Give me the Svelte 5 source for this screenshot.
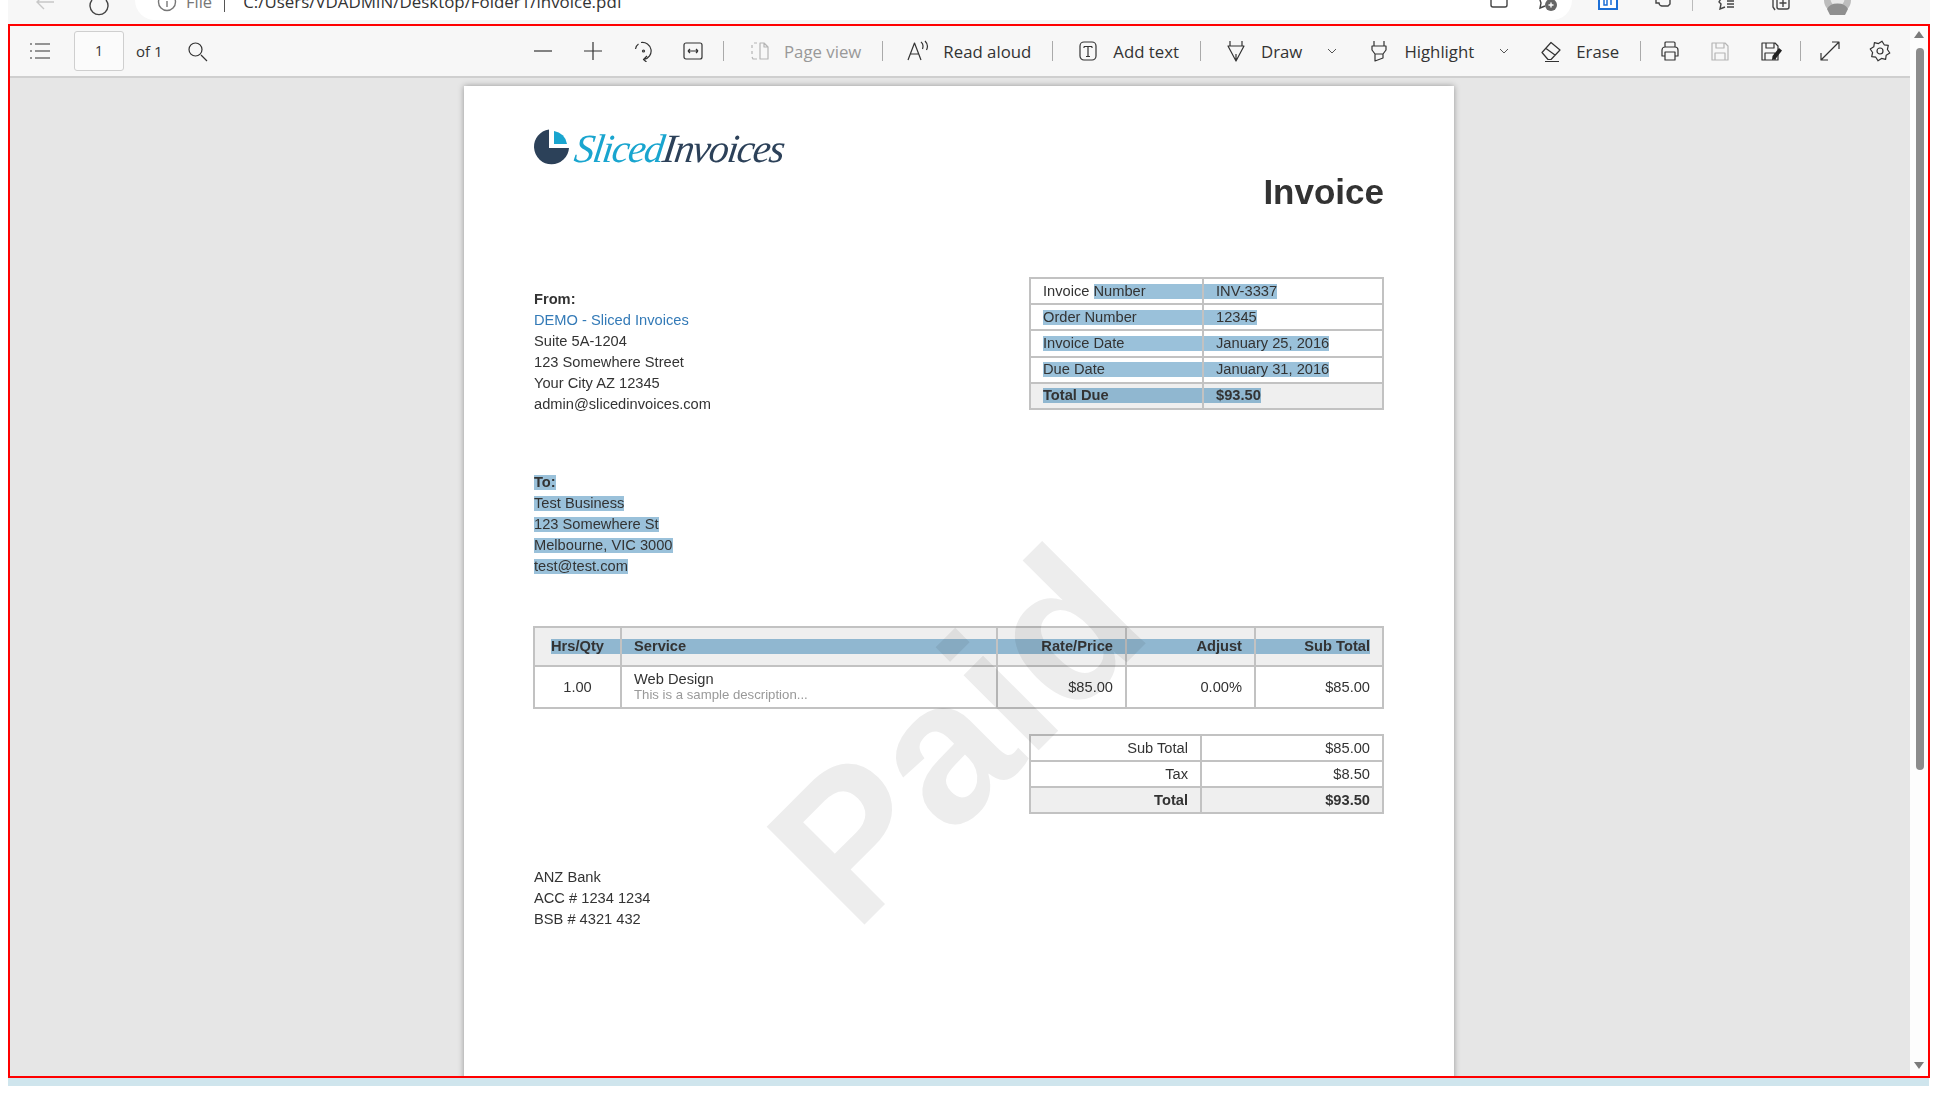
<script>
	const icons = {
		list: 'M1 4h2M6 4h15M1 11h2M6 11h15M1 18h2M6 18h15',
		search: 'M15 15l6 6M16 9.5a6.5 6.5 0 1 1-13 0a6.5 6.5 0 0 1 13 0z',
		minus: 'M2 11h18',
		plus: 'M11 2v18M2 11h18',
		rotate: 'M3.500 9C4 6.500 5 5 6.500 4M9 2.500a8.500 8.500 0 0 1 3 17M15 16l-3.500 3.500 3 2.500M10.500 11a1 1 0 1 0 2 0a1 1 0 1 0-2 0z',
		fit: 'M4 3h14a2 2 0 0 1 2 2v12a2 2 0 0 1-2 2H4a2 2 0 0 1-2-2V5a2 2 0 0 1 2-2zM6 11h10M6 11l2-2M6 11l2 2M16 11l-2-2M16 11l-2 2',
		page: 'M9 3H6M4 5v3M4 11v3M4 17l1 2h4M12 3h4l4 4v12h-8zM16 3v4h4',
		aloud: 'M1 20L7.500 3 14 20M3.500 14h8M14 2c2 1.500 2.500 4 1.500 7M18 1c2.500 2.500 3 6 1.500 9',
		text: 'M7 2h8a4 4 0 0 1 4 4v10a4 4 0 0 1-4 4H7a4 4 0 0 1-4-4V6a4 4 0 0 1 4-4zM7 6.500h8M7 6.500v1.500M15 6.500v1.500M11 6.500v10M9 16.500h4',
		draw: 'M5 1v5h12V1M3 6h16l-8 15zM11 21v-7',
		mark: 'M6 1v5h10V1M4 6h14v4l-3 4H7l-3-4zM7 14v7l8-3v-4',
		erase: 'M2 12.500L11 2.500l9 7.500-9 9.500H8zM6 8.500l9 6.500M5 21.500h14',
		print: 'M6 7V3a1 1 0 0 1 1-1h8a1 1 0 0 1 1 1v4M6 16H3V10a3 3 0 0 1 3-3h10a3 3 0 0 1 3 3v6h-3M6 12h10v8H6z',
		save: 'M3 3h13l3 3v14H3zM7 3v5h8V3M6 20v-7h10v7',
		expand: 'M2 20L20 2M13 2h7v7M2 13v7h7'
	};

	// eight-toothed outline for the settings icon
	function gearPath() {
		let d = '';
		for (let i = 0; i < 16; i++) {
			const a = (i * Math.PI) / 8 + Math.PI / 16;
			const r = i % 2 ? 7.5 : 10;
			d += `${i ? 'L' : 'M'}${(11 + r * Math.cos(a)).toFixed(1)} ${(11 + r * Math.sin(a)).toFixed(1)}`;
		}
		return d + 'zM14 11a3 3 0 1 1-6 0a3 3 0 0 1 6 0z';
	}
	icons.gear = gearPath();

	const from = ['Suite 5A-1204', '123 Somewhere Street', 'Your City AZ 12345', 'admin@slicedinvoices.com'];
	const to = ['Test Business', '123 Somewhere St', 'Melbourne, VIC 3000', 'test@test.com'];
	const meta = [
		{ label: 'Order Number', value: '12345' },
		{ label: 'Invoice Date', value: 'January 25, 2016' },
		{ label: 'Due Date', value: 'January 31, 2016' }
	];
	const totals = [
		{ label: 'Sub Total', value: '$85.00' },
		{ label: 'Tax', value: '$8.50' },
		{ label: 'Total', value: '$93.50', strong: true }
	];
</script>

{#snippet icon(name, cls = '')}
	<svg class="icon {cls}" viewBox="0 0 22 22" aria-hidden="true"><path d={icons[name]} /></svg>
{/snippet}

{#snippet chevron()}
	<svg class="chevron" viewBox="0 0 12 12" aria-hidden="true"><path d="M2 4l4 4 4-4" /></svg>
{/snippet}

<div class="browser">
	<header class="chrome">
		<div class="nav-icons">
			<svg class="c-icon back" viewBox="0 0 22 22"><path d="M20 2H4M10 -5l-7 7 7 7" /></svg>
			<svg class="c-icon" viewBox="0 0 22 22"><path d="M18 0a9 9 0 1 1-14 0" /></svg>
		</div>
		<div class="address">
			<svg class="c-icon info" viewBox="0 0 20 20"><circle cx="10" cy="2" r="8.500" /><path d="M10 1v6" /></svg>
			<span class="scheme">File</span>
			<span class="pipe"></span>
			<span class="url">C:/Users/VDADMIN/Desktop/Folder1/invoice.pdf</span>
			<div class="address-end">
				<svg class="c-icon small" viewBox="0 0 18 8"><path d="M1 -5v10a2 2 0 0 0 2 2h12a2 2 0 0 0 2-2v-10" /></svg>
				<svg class="c-icon fav" viewBox="0 0 22 12"><path d="M3 -3l2 6-1 5 5-2" /><circle cx="15" cy="5" r="6" fill="#666" stroke="none" /><path d="M15 2.500v5M12.500 5h5" stroke="#fff" /></svg>
			</div>
		</div>
		<div class="ext-icons">
			<svg class="c-icon outlook" viewBox="0 0 20 10"><rect x="1" y="-4" width="18" height="13" fill="#fff" stroke="#1c6fd6" stroke-width="2" /><path d="M6 -2v7h3v-7zM13 -2v7" stroke="#1c6fd6" stroke-width="1.500" /></svg>
			<svg class="c-icon puzzle" viewBox="0 0 20 10"><path d="M3 -4v7h3c0 2 2 3 3 3h6l2-2V-2" /></svg>
			<span class="pipe ext-pipe"></span>
			<svg class="c-icon star" viewBox="0 0 20 10"><path d="M6 -3L3 2l2 2-1 5 5-2M11 1h7M11 4h7M11 7h7" /></svg>
			<svg class="c-icon coll" viewBox="0 0 22 11"><path d="M3 -3v10l2 3M7 -3h12v10a2 2 0 0 1-2 2H9a2 2 0 0 1-2-2zM13 -1v8M9.500 3h7" /></svg>
			<svg class="avatar" viewBox="0 0 27 15"><circle cx="13.500" cy="0" r="13.500" fill="#bdbdbd" /><circle cx="13.500" cy="-1" r="7" fill="#e8e8e8" /><path d="M3 9a11 8 0 0 1 21 0l-3 6H6z" fill="#8f8f8f" /></svg>
			<span class="more">•••</span>
		</div>
	</header>

	<div class="viewer">
		<div class="toolbar">
			<button class="tool">{@render icon('list')}</button>
			<span class="page-input">1</span>
			<span class="page-total">of 1</span>
			<button class="tool search">{@render icon('search')}</button>

			<div class="tools">
				<button class="tool">{@render icon('minus')}</button>
				<button class="tool">{@render icon('plus')}</button>
				<button class="tool">{@render icon('rotate')}</button>
				<button class="tool">{@render icon('fit')}</button>
				<span class="sep"></span>
				<button class="labelled disabled">{@render icon('page')}<span>Page view</span></button>
				<span class="sep"></span>
				<button class="labelled">{@render icon('aloud')}<span>Read aloud</span></button>
				<span class="sep"></span>
				<button class="labelled">{@render icon('text')}<span>Add text</span></button>
				<span class="sep"></span>
				<button class="labelled with-menu">{@render icon('draw')}<span>Draw</span>{@render chevron()}</button>
				<button class="labelled with-menu">{@render icon('mark')}<span>Highlight</span>{@render chevron()}</button>
				<button class="labelled erase">{@render icon('erase')}<span>Erase</span></button>
				<span class="sep"></span>
				<button class="tool">{@render icon('print')}</button>
				<button class="tool disabled">{@render icon('save')}</button>
				<button class="tool save-as">
					{@render icon('save')}
					<svg class="pencil" viewBox="0 0 10 12"><path d="M7 0l3 2.500L3.500 11 0 12l.5-4z" /></svg>
				</button>
				<span class="sep"></span>
				<button class="tool">{@render icon('expand')}</button>
				<button class="tool">{@render icon('gear')}</button>
			</div>
		</div>

		<div class="canvas">
			<article class="page">
				<div class="logo">
					<svg class="pie" viewBox="0 0 37 37">
						<path d="M16 1.500A17.500 17.500 0 1 0 36 20H16z" fill="#2c4159" />
						<path d="M21 3a15 15 0 0 1 13 13H21z" fill="#19a5cf" />
					</svg>
					<span class="wordmark"><span class="sliced">Sliced</span><span class="invoices">Invoices</span></span>
				</div>

				<h1>Invoice</h1>

				<div class="meta-row">
					<address class="block from">
						<strong>From:</strong>
						<span class="link">DEMO - Sliced Invoices</span>
						{#each from as line}
							<span>{line}</span>
						{/each}
					</address>

					<table class="grid meta">
						<colgroup><col class="meta-label" /><col /></colgroup>
						<tbody>
							<tr>
								<td><div class="fill-right"><span>Invoice&nbsp;</span><mark>Number</mark></div></td>
								<td><mark class="fill-left">INV-3337</mark></td>
							</tr>
							{#each meta as row}
								<tr>
									<td><mark class="whole">{row.label}</mark></td>
									<td><mark class="fill-left">{row.value}</mark></td>
								</tr>
							{/each}
							<tr class="shaded bold">
								<td><mark class="whole">Total Due</mark></td>
								<td><mark class="fill-left">$93.50</mark></td>
							</tr>
						</tbody>
					</table>
				</div>

				<address class="block to">
					<strong><mark>To:</mark></strong>
					{#each to as line}
						<span><mark>{line}</mark></span>
					{/each}
				</address>

				<table class="grid items">
					<colgroup>
						<col class="c-qty" /><col class="c-service" /><col class="c-num" /><col class="c-num" /><col />
					</colgroup>
					<thead>
						<tr class="shaded bold">
							<th><mark class="whole qty-head">Hrs/Qty</mark></th>
							<th><mark class="whole left-head">Service</mark></th>
							<th><mark class="whole num">Rate/Price</mark></th>
							<th><mark class="whole num">Adjust</mark></th>
							<th class="last-head"><mark class="whole">Sub Total</mark></th>
						</tr>
					</thead>
					<tbody>
						<tr>
							<td class="center">1.00</td>
							<td class="service">Web Design<small>This is a sample description...</small></td>
							<td class="num">$85.00</td>
							<td class="num">0.00%</td>
							<td class="num">$85.00</td>
						</tr>
					</tbody>
				</table>

				<table class="grid totals">
					<colgroup><col class="t-label" /><col /></colgroup>
					<tbody>
						{#each totals as row}
							<tr class:shaded={row.strong} class:bold={row.strong}>
								<td class="num">{row.label}</td>
								<td class="num">{row.value}</td>
							</tr>
						{/each}
					</tbody>
				</table>

				<address class="block bank">
					<span>ANZ Bank</span>
					<span>ACC # 1234 1234</span>
					<span>BSB # 4321 432</span>
				</address>

				<svg class="watermark" aria-hidden="true">
					<text transform="translate(391 848) rotate(-45)">Paid</text>
				</svg>
			</article>
		</div>

		<div class="scrollbar">
			<span class="arrow up"></span>
			<span class="thumb"></span>
			<span class="arrow down"></span>
		</div>
	</div>
	<div class="strip"></div>
</div>

<style>
	:global(body) {
		background: #fff;
	}

	.browser {
		width: 1938px;
		height: 1102px;
		overflow: hidden;
		background: #fff;
		font-family: 'Liberation Sans', Arial, sans-serif;
		color: #333;
	}

	/* browser chrome, cut off by the top of the picture */
	.chrome {
		display: flex;
		height: 24px;
		margin-left: 8px;
		width: 1922px;
		background: #f7f7f7;
		font-family: 'Open Sans', sans-serif;
		font-size: 16.500px;
		overflow: hidden;
	}

	.nav-icons {
		display: flex;
		width: 127px;
		padding-left: 26px;
		gap: 32px;
		box-sizing: border-box;
	}

	.c-icon {
		width: 22px;
		height: 22px;
		fill: none;
		stroke: #444;
		stroke-width: 1.4;
	}

	.back {
		stroke: #c8c8c8;
	}

	.address {
		display: flex;
		align-items: flex-start;
		width: 1437px;
		height: 20px;
		background: #fff;
		border-radius: 0 0 20px 20px;
		padding-left: 22px;
		box-sizing: border-box;
	}

	.info {
		width: 20px;
		height: 20px;
		stroke: #777;
	}

	.scheme {
		margin: -10px 0 0 9px;
		color: #777;
	}

	.pipe {
		width: 1px;
		height: 12px;
		margin-left: 12px;
		background: #555;
	}

	.url {
		margin: -10px 0 0 18px;
		color: #333;
		font-size: 16.900px;
	}

	.address-end {
		display: flex;
		gap: 28px;
		margin-left: auto;
		margin-right: 14px;
	}

	.small {
		width: 18px;
		height: 8px;
	}

	.fav {
		width: 22px;
		height: 12px;
	}

	.ext-icons {
		display: flex;
		align-items: flex-start;
		padding-left: 26px;
	}

	.ext-icons .c-icon {
		width: 20px;
		height: 10px;
		margin-right: 35px;
	}

	.ext-icons .puzzle {
		margin-right: 19px;
	}

	.ext-pipe {
		height: 11px;
		margin: 0 23px 0 0;
		background: #bbb;
	}

	.ext-icons .coll {
		width: 22px;
		height: 11px;
		margin-right: 32px;
	}

	.ext-icons .star {
		margin-right: 34px;
	}

	.avatar {
		width: 27px;
		height: 15px;
	}

	.more {
		margin: -8px 0 0 33px;
		font-size: 10px;
		letter-spacing: 0.5px;
		color: #222;
	}

	.viewer {
		position: relative;
		width: 1922px;
		height: 1054px;
		margin-left: 8px;
		border: 2px solid #f00;
		box-sizing: border-box;
		display: flex;
		flex-direction: column;
	}

	.toolbar {
		display: flex;
		align-items: center;
		flex: none;
		height: 52px;
		padding-left: 5px;
		box-sizing: border-box;
		background: #f7f7f7;
		border-bottom: 2px solid #cfcfcf;
		font-family: 'Open Sans', sans-serif;
		font-size: 16.800px;
		color: #333;
	}

	button {
		display: inline-flex;
		align-items: center;
		justify-content: center;
		flex: none;
		padding: 0;
		border: 0;
		background: none;
		font: inherit;
		color: inherit;
	}

	.tool {
		position: relative;
		width: 50px;
		height: 40px;
	}

	.icon {
		flex: none;
		width: 22px;
		height: 22px;
		fill: none;
		stroke: #333;
		stroke-width: 1.200;
		stroke-linejoin: round;
	}

	.page-input {
		width: 50px;
		height: 40px;
		margin-left: 9px;
		box-sizing: border-box;
		border: 1px solid #cfcfcf;
		border-radius: 3px;
		background: #fbfbfb;
		text-align: center;
		line-height: 38px;
		font-size: 14px;
	}

	.page-total {
		margin-left: 12px;
		width: 26px;
		font-size: 15px;
		white-space: nowrap;
	}

	.search {
		margin-left: 10px;
	}

	.tools {
		display: flex;
		align-items: center;
		margin-left: 296px;
	}

	.sep {
		flex: none;
		width: 1px;
		height: 20px;
		margin: 0 0 0 5px;
		background: #aaa;
	}

	.sep + .tool {
		margin-left: 4px;
	}

	.labelled {
		gap: 14px;
		padding: 0 21px 0 24px;
		height: 40px;
	}

	.labelled + .sep {
		margin-left: 0;
	}

	.with-menu {
		padding-right: 8px;
	}

	.with-menu + .labelled {
		padding-left: 22px;
	}

	.erase {
		padding-left: 22px;
	}

	.chevron {
		width: 12px;
		height: 12px;
		fill: none;
		stroke: #555;
		stroke-width: 1;
	}

	.with-menu .chevron {
		margin-left: 10px;
	}

	.disabled {
		color: #999;
	}

	.disabled .icon {
		stroke: #b5b5b5;
	}

	.save-as .pencil {
		position: absolute;
		left: 27px;
		top: 17px;
		width: 10px;
		height: 12px;
		fill: #222;
	}

	.canvas {
		flex: 1;
		min-height: 0;
		position: relative;
		display: flex;
		background: #e6e6e6;
		overflow: hidden;
	}

	.page {
		position: absolute;
		left: 454px;
		top: 8px;
		width: 990px;
		height: 1400px;
		padding: 0 70px;
		box-sizing: border-box;
		background: #fff;
		box-shadow: 0 0 6px rgba(0, 0, 0, 0.35);
		font-size: 14.660px;
		color: #333;
		isolation: isolate;
	}

	.logo {
		display: flex;
		align-items: center;
		height: 37px;
		margin-top: 42px;
	}

	.pie {
		width: 37px;
		height: 37px;
		flex: none;
		margin-left: -1px;
	}

	.wordmark {
		margin-left: 5px;
		font-family: 'Liberation Serif', serif;
		font-style: italic;
		font-size: 40px;
		letter-spacing: -1.600px;
		line-height: 37px;
		transform: translateY(2px) skewX(-8deg);
	}

	.sliced {
		color: #19a5cf;
	}

	.invoices {
		color: #2c4159;
	}

	h1 {
		margin: 7px 0 0;
		text-align: right;
		font-size: 35px;
		line-height: 40px;
		font-weight: 700;
		color: #333;
	}

	.meta-row {
		display: flex;
		justify-content: space-between;
		margin-top: 65px;
	}

	.block {
		display: flex;
		flex-direction: column;
		align-items: flex-start;
		font-style: normal;
		line-height: 20.900px;
	}

	.from {
		margin-top: 12px;
	}

	.link {
		color: #337ab7;
	}

	.to {
		margin-top: 58px;
	}

	.bank {
		margin-top: 53px;
	}

	mark {
		display: inline-block;
		vertical-align: top;
		margin-top: 3px;
		height: 15px;
		line-height: 15px;
		background: rgba(2, 100, 162, 0.4);
		color: inherit;
	}

	.grid {
		border-collapse: collapse;
		table-layout: fixed;
		line-height: 1.100;
	}

	.grid mark {
		margin-top: 0;
	}

	.grid td,
	.grid th {
		padding: 0;
		border: 2px solid #c2c2c2;
		font-weight: inherit;
		text-align: left;
	}

	.shaded {
		background: #efefef;
	}

	.bold {
		font-weight: 700;
	}

	.meta {
		width: 355px;
		height: 131px;
	}

	.meta-label {
		width: 173px;
	}

	.meta tr {
		height: 26.200px;
	}

	.fill-right {
		display: flex;
		padding-left: 12px;
		line-height: 15px;
	}

	.fill-right mark {
		flex: 1;
	}

	.whole {
		display: block;
		margin-left: 12px;
	}

	.fill-left {
		display: block;
		width: fit-content;
		padding-left: 12px;
	}

	.items {
		width: 851px;
		margin: 49px 0 0 -1px;
	}

	.c-qty {
		width: 87px;
	}

	.c-service {
		width: 376px;
	}

	.c-num {
		width: 129px;
	}

	.items thead tr {
		height: 39px;
	}

	.items tbody tr {
		height: 42px;
	}

	.items th {
		line-height: 15px;
	}

	.items .qty-head {
		margin-left: 16px;
	}

	.items .left-head {
		margin-left: 0;
		padding-left: 12px;
	}

	.items .num {
		margin-left: 0;
		padding-right: 12px;
		text-align: right;
	}

	.last-head mark {
		margin: 0 12px 0 0;
		text-align: right;
	}

	.grid td.num {
		padding-right: 12px;
		text-align: right;
	}

	.grid td.center {
		text-align: center;
	}

	.grid td.service {
		padding-left: 12px;
		line-height: 15px;
	}

	small {
		display: block;
		font-size: 13.200px;
		line-height: 15px;
		color: #999;
	}

	.totals {
		width: 355px;
		height: 80px;
		margin: 25px 0 0 auto;
	}

	.t-label {
		width: 171px;
	}

	.watermark {
		position: absolute;
		inset: 0;
		width: 100%;
		height: 100%;
		mix-blend-mode: multiply;
		pointer-events: none;
	}

	.watermark text {
		font-family: 'Liberation Sans', Arial, sans-serif;
		font-size: 201px;
		font-weight: 700;
		fill: #ededed;
	}

	.scrollbar {
		position: absolute;
		right: 0;
		top: 0;
		bottom: 0;
		width: 18px;
		background: #fdfdfd;
	}

	.thumb {
		position: absolute;
		left: 6px;
		top: 22px;
		width: 8px;
		height: 722px;
		border-radius: 4px;
		background: #8c8c8c;
	}

	.arrow {
		position: absolute;
		left: 4px;
		width: 0;
		height: 0;
		border-left: 5px solid transparent;
		border-right: 5px solid transparent;
	}

	.arrow.up {
		top: 5px;
		border-bottom: 7px solid #7c7c7c;
	}

	.arrow.down {
		bottom: 7px;
		border-top: 7px solid #7c7c7c;
	}

	.strip {
		width: 1921px;
		height: 8px;
		margin-left: 8px;
		background: #cfe5ed;
	}
</style>
